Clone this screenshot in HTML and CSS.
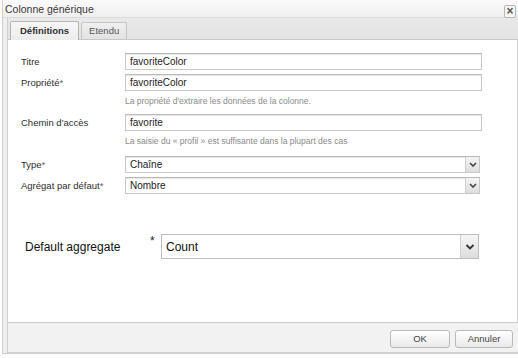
FILE: index.html
```html
<!DOCTYPE html>
<html lang="fr">

<head>
    <meta charset="UTF-8">
    <meta name="viewport" content="width=device-width, initial-scale=1.0">
    <title>Colonne générique</title>
    <link rel="stylesheet" href="styles.css">
</head>

<body>
    <div class="dialog">
        <div class="titlebar">
            <span class="title">Colonne générique</span>
            <span class="close">&times;</span>
        </div>

        <div class="frame">
            <div class="tabs">
                <div class="tab active">Définitions</div>
                <div class="tab">Etendu</div>
            </div>

            <div class="panel">
                <div class="row">
                    <label class="label">Titre</label>
                    <div class="input">favoriteColor</div>
                </div>
                <div class="row">
                    <label class="label">Propriété<span class="req">*</span></label>
                    <div class="input">favoriteColor</div>
                </div>
                <div class="hint">La propriété d'extraire les données de la colonne.</div>
                <div class="row">
                    <label class="label">Chemin d'accès</label>
                    <div class="input">favorite</div>
                </div>
                <div class="hint">La saisie du « profil » est suffisante dans la plupart des cas</div>
                <div class="row spaced">
                    <label class="label">Type<span class="req">*</span></label>
                    <div class="input select">
                        <span>Chaîne</span>
                        <span class="arrow"><svg width="8" height="5" viewBox="0 0 8 5"><path d="M1 1l3 3 3-3" fill="none" stroke="#444" stroke-width="1.6"/></svg></span>
                    </div>
                </div>
                <div class="row">
                    <label class="label">Agrégat par défaut<span class="req">*</span></label>
                    <div class="input select">
                        <span>Nombre</span>
                        <span class="arrow"><svg width="8" height="5" viewBox="0 0 8 5"><path d="M1 1l3 3 3-3" fill="none" stroke="#444" stroke-width="1.6"/></svg></span>
                    </div>
                </div>

                <div class="big-row">
                    <label class="big-label">Default aggregate</label>
                    <span class="big-req">*</span>
                    <div class="big-select">
                        <span>Count</span>
                        <span class="big-arrow"><svg width="10" height="6" viewBox="0 0 10 6"><path d="M1.5 1l3.5 3.5 3.5-3.5" fill="none" stroke="#333" stroke-width="1.8"/></svg></span>
                    </div>
                </div>
            </div>

            <div class="footer">
                <button class="btn ok">OK</button>
                <button class="btn cancel">Annuler</button>
            </div>
        </div>
    </div>
</body>

</html>
```

FILE: styles.css
```css
body {
    margin: 0;
    background-color: #fff;
    font-family: "Liberation Sans", Arial, sans-serif;
    color: #333;
}

.dialog {
    width: 516px;
    height: 353px;
    margin-left: 2px;
    border-left: 1px solid #cfcfcf;
    border-right: 1px solid #d8d8d8;
    border-bottom: 1px solid #cfcfcf;
    background: linear-gradient(#fafafa, #efefef 18px, #efefef);
    display: flex;
    flex-direction: column;
}

.titlebar {
    height: 17px;
    display: flex;
    align-items: center;
    justify-content: space-between;
    padding: 0 2px 0 2px;
    border-bottom: 1px solid #dcdcdc;
}

.title {
    font-size: 10.5px;
    color: #3a3a3a;
}

.close {
    width: 10px;
    height: 11px;
    margin-top: 6px;
    margin-right: 1px;
    border: 1px solid #b5b5b5;
    border-radius: 2px;
    background: #f7f7f7;
    font-size: 12px;
    line-height: 10px;
    text-align: center;
    color: #555;
    font-weight: bold;
}

.frame {
    flex: 1;
    margin-left: 4px;
    display: flex;
    flex-direction: column;
    border-left: 1px solid #cfcfcf;
}

.tabs {
    height: 21px;
    display: flex;
    align-items: flex-end;
    padding-left: 2px;
    background: linear-gradient(#e9e9e9, #e3e3e3);
    border-bottom: 1px solid #c8c8c8;
    border-right: 1px solid #c8c8c8;
}

.tab {
    height: 16px;
    line-height: 16px;
    padding: 0 7px;
    margin-right: 2px;
    font-size: 9.5px;
    color: #555;
    border: 1px solid #c6c6c6;
    border-bottom: none;
    border-radius: 2px 2px 0 0;
    background: linear-gradient(#f0f0f0, #e2e2e2);
}

.tab.active {
    padding: 0 9px;
    height: 18px;
    line-height: 18px;
    margin-bottom: -1px;
    font-weight: bold;
    color: #333;
    border-color: #b4b4b4;
    background: linear-gradient(#f7f7f7, #ececec);
}

.panel {
    height: 269px;
    padding: 13px 0 0 13px;
    background-color: #fff;
    border-right: 2px solid #d4d4d4;
    border-bottom: 1px solid #cacaca;
}

.row {
    display: flex;
    align-items: center;
    margin-bottom: 4px;
}

.row.spaced {
    margin-top: 8px;
}

.label {
    width: 104px;
    font-size: 9.5px;
    color: #2e2e2e;
}

.req {
    color: #666;
}

.input {
    width: 349px;
    height: 15px;
    padding: 0 2px 0 4px;
    border: 1px solid #c9c9c9;
    border-top-color: #b9b9b9;
    box-shadow: inset 0 1px 1px #e6e6e6;
    font-size: 10px;
    line-height: 15px;
    color: #222;
}

.select {
    display: flex;
    justify-content: space-between;
    padding-right: 0;
}

.arrow {
    width: 13px;
    height: 15px;
    display: flex;
    align-items: center;
    justify-content: center;
    border-left: 1px solid #d0d0d0;
    background: linear-gradient(#f4f4f4, #dedede);
}

.hint {
    margin: 0 0 6px 104px;
    font-size: 8.5px;
    line-height: 13px;
    color: #8a8a8a;
}

.big-row {
    display: flex;
    align-items: center;
    margin-top: 40px;
    padding-left: 4px;
}

.big-label {
    width: 125px;
    font-size: 12px;
    color: #111;
}

.big-req {
    width: 11px;
    font-size: 12px;
    align-self: flex-start;
    color: #222;
}

.big-select {
    width: 312px;
    height: 23px;
    display: flex;
    align-items: center;
    justify-content: space-between;
    border: 1px solid #bdbdbd;
    font-size: 12px;
    color: #111;
    padding-left: 4px;
}

.big-arrow {
    width: 17px;
    height: 23px;
    display: flex;
    align-items: center;
    justify-content: center;
    border-left: 1px solid #d0d0d0;
    background: linear-gradient(#f6f6f6, #dcdcdc);
}

.footer {
    flex: 1;
    display: flex;
    justify-content: flex-end;
    align-items: center;
    gap: 5px;
    padding: 2px 6px 0 0;
    background-color: #f2f2f2;
    border-bottom: 1px solid #d0d0d0;
}

.btn {
    height: 18px;
    padding: 0;
    font-family: "Liberation Sans", Arial, sans-serif;
    font-size: 9.5px;
    color: #444;
    border: 1px solid #b9b9b9;
    border-radius: 3px;
    background: linear-gradient(#ffffff, #e9e9e9);
}

.ok {
    width: 60px;
}

.cancel {
    width: 58px;
}
```
